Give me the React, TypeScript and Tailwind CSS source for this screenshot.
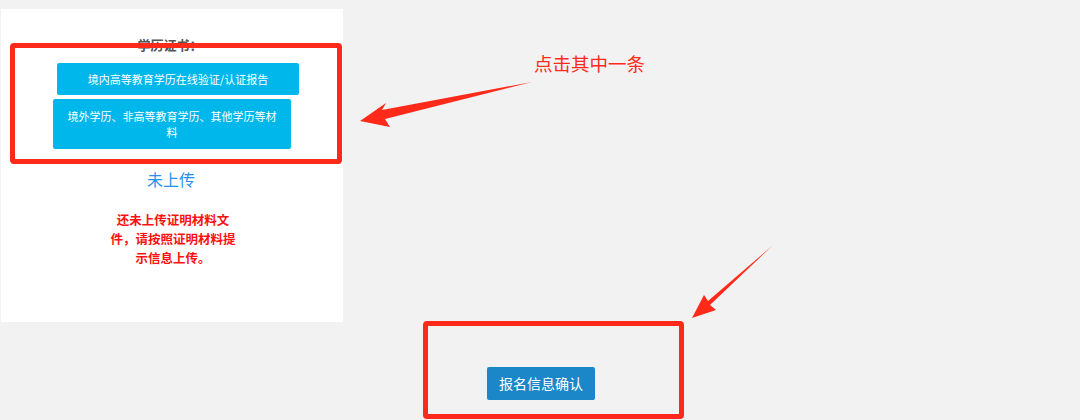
const cjk = { fontFamily: '"Noto Sans CJK SC", "Noto Sans", sans-serif' };

function Arrows() {
  return (
    <svg className="pointer-events-none absolute inset-0" width="1080" height="420" viewBox="0 0 1080 420">
      {/* arrow to the certificate buttons */}
      <path d="M532 82 L382 110 L386 103 L360 121 L390 127 L385 119 Z" fill="#ff2a1a" />
      {/* arrow to the confirm button */}
      <path d="M772 246 L708 301 L704 295 L692 318 L716 310 L710 305 Z" fill="#ff2a1a" />
    </svg>
  );
}

export default function App() {
  return (
    <div className="relative h-[420px] w-[1080px] overflow-hidden bg-[#f2f2f2]" style={cjk}>
      <div className="flex flex-col">
        <div className="ml-[1px] mt-[9px] flex h-[313px] w-[342px] flex-col items-start bg-white">
          <div className="mt-[26px] w-full pr-[4px] text-center text-[13px] font-bold leading-[20px] text-[#555]">
            学历证书：
          </div>
          <button className="ml-[56px] mt-[8px] h-[32px] w-[242px] rounded-[2px] bg-[#00b7ec] text-[11px] text-white">
            境内高等教育学历在线验证/认证报告
          </button>
          <button className="ml-[52px] mt-[4px] h-[50px] w-[238px] rounded-[2px] bg-[#00b7ec] px-[14px] text-[11px] leading-[16px] text-white">
            境外学历、非高等教育学历、其他学历等材料
          </button>
          <div className="mt-[19px] w-full pr-[2px] text-center text-[16px] leading-[22px] text-[#2690ee]">
            未上传
          </div>
          <div className="mx-auto mt-[20px] w-[128px] pl-[2px] text-center text-[12.5px] font-bold leading-[19px] text-[#ff1010]">
            还未上传证明材料文件，请按照证明材料提示信息上传。
          </div>
        </div>
        <button className="ml-[487px] mt-[45px] h-[33px] w-[108px] rounded-[2px] bg-[#1b87c9] text-[14px] text-white">
          报名信息确认
        </button>
      </div>

      {/* annotations */}
      <div className="absolute left-[10px] top-[43px] h-[121px] w-[332px] rounded-[4px] border-[5px] border-[#ff2a1a]" />
      <div className="absolute left-[423px] top-[321px] h-[98px] w-[261px] rounded-[4px] border-[5px] border-[#ff2a1a]" />
      <div className="absolute left-[534px] top-[50px] text-[18.5px] leading-[26px] text-[#ff2a1a]">
        点击其中一条
      </div>
      <Arrows />
    </div>
  );
}
